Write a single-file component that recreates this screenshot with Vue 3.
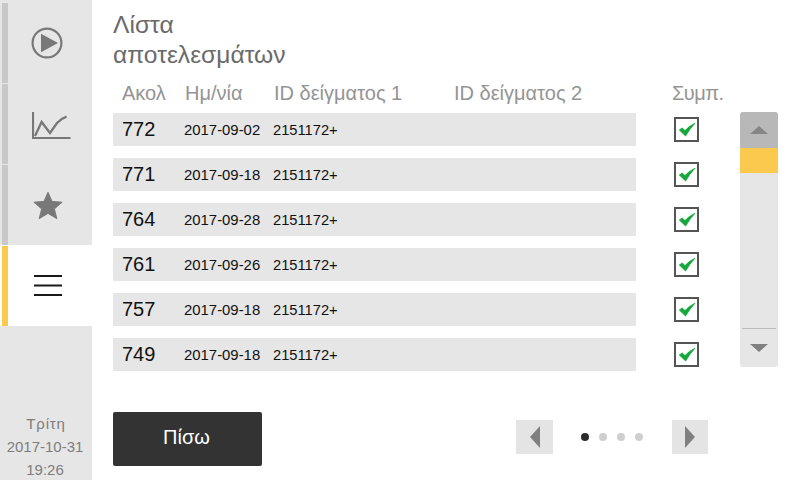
<script setup>
const rows = [
  ['772', '2017-09-02'],
  ['771', '2017-09-18'],
  ['764', '2017-09-28'],
  ['761', '2017-09-26'],
  ['757', '2017-09-18'],
  ['749', '2017-09-18'],
]
const tabs = ['play', 'chart', 'star', 'menu']
</script>

<template>
  <div class="screen">
    <aside class="side">
      <div class="tabs">
        <div v-for="t in tabs" :key="t" class="tab" :class="{ active: t === 'menu' }">
          <div class="strip"></div>
          <div class="tab-icon" :class="t">
            <svg v-if="t === 'play'" width="34" height="34" viewBox="0 0 34 34">
              <circle cx="17" cy="17" r="14.4" fill="none" stroke="#787878" stroke-width="2.2" />
              <path d="M11 7.7 L28 17 L11 26.3 Z" fill="#787878" />
            </svg>
            <svg v-else-if="t === 'chart'" width="40" height="30" viewBox="0 0 40 30">
              <path d="M1 3 V29 H38.5" fill="none" stroke="#787878" stroke-width="2.2" />
              <path d="M3 27 L9.6 13 L18 24 L25 14 Q29 9.5 34.6 7.6" fill="none" stroke="#787878" stroke-width="2.3" />
            </svg>
            <svg v-else-if="t === 'star'" width="30" height="29" viewBox="0 0 32 30">
              <path d="M16 .8 L20.3 10.6 L31 11.5 L22.8 18.6 L25.4 29 L16 23.4 L6.6 29 L9.2 18.6 L1 11.5 L11.7 10.6 Z" fill="#787878" stroke="#787878" stroke-linejoin="round" />
            </svg>
            <svg v-else width="28" height="24" viewBox="0 0 28 24">
              <path d="M0 2 H28 M0 11.5 H28 M0 21 H28" stroke="#1a1a1a" stroke-width="2" />
            </svg>
          </div>
        </div>
      </div>
      <div class="clock">
        <div class="day">Τρίτη</div>
        <div>2017-10-31</div>
        <div>19:26</div>
      </div>
    </aside>

    <main class="main">
      <h1 class="title">Λίστα<br />αποτελεσμάτων</h1>

      <div class="head">
        <span>Ακολ</span>
        <span>Ημ/νία</span>
        <span>ID δείγματος 1</span>
        <span>ID δείγματος 2</span>
        <span class="conf">Συμπ.</span>
      </div>

      <div class="body">
        <div class="list">
          <div v-for="r in rows" :key="r[0]" class="line">
            <div class="row">
              <span class="num">{{ r[0] }}</span>
              <span class="date">{{ r[1] }}</span>
              <span>2151172+</span>
            </div>
            <div class="check">
              <svg width="18" height="15" viewBox="-1 -1 18 15">
                <path d="M0.3 7 L3.2 5 L6 7.6 Q10 3 16 0.2 Q10.5 6 6.6 13 Z" fill="#14a83a" stroke="#14a83a" stroke-width="0.8" stroke-linejoin="round" />
              </svg>
            </div>
          </div>
        </div>

        <div class="scroll">
          <div class="sc-up"><span class="tri-up"></span></div>
          <div class="sc-thumb"></div>
          <div class="sc-track"></div>
          <div class="sc-down"><span class="tri-down"></span></div>
        </div>
      </div>

      <div class="foot">
        <button class="back">Πίσω</button>
        <div class="pager">
          <div class="pg-btn"><span class="tri-left"></span></div>
          <div class="dots">
            <span class="dot on"></span>
            <span class="dot"></span>
            <span class="dot"></span>
            <span class="dot"></span>
          </div>
          <div class="pg-btn narrow"><span class="tri-right"></span></div>
        </div>
      </div>
    </main>
  </div>
</template>

<style>
html, body { margin: 0; background: #fff; }
</style>

<style scoped>
.screen {
  width: 800px;
  height: 480px;
  display: flex;
  overflow: hidden;
  background: #fff;
  font-family: "Liberation Sans", Arial, sans-serif;
}
.side {
  width: 92px;
  height: 480px;
  background: #e6e6e6;
  display: flex;
  flex-direction: column;
  justify-content: space-between;
  flex: none;
}
.tabs { padding-top: 3px; display: flex; flex-direction: column; gap: 1px; }
.tab { height: 80px; display: flex; }
.tab.active { background: #fff; box-shadow: 0 -1px 0 #fff; }
.strip { width: 6px; margin-left: 2px; background: #c8c8c8; flex: none; }
.active .strip { background: #fcc94f; }
.tab-icon { flex: 1; display: flex; align-items: center; justify-content: center; padding-right: 4px; }
.tab-icon.play { padding-right: 6px; }
.tab-icon.chart { padding-right: 0; padding-left: 4px; }
.tab-icon svg { display: block; }
.clock {
  text-align: center;
  color: #7d7d7d;
  font-size: 15px;
  line-height: 23px;
  margin-bottom: -1px;
  padding-right: 2px;
}
.day { letter-spacing: 0.8px; padding-left: 2px; }
.main { flex: 1; padding-left: 21px; display: flex; flex-direction: column; }
.title {
  margin: 10px 0 0;
  font-size: 24.6px;
  line-height: 30px;
  font-weight: 400;
  color: #6a6a6a;
}
.head {
  height: 26px;
  margin-top: 10px;
  display: grid;
  grid-template-columns: 63px 89px 180px 218px auto;
  padding-left: 9px;
  align-items: center;
  font-size: 20px;
  color: #949494;
}
.conf { letter-spacing: -0.5px; }
.body { display: flex; margin-top: 6px; }
.list { width: 587px; display: flex; flex-direction: column; gap: 12px; padding-top: 1px; flex: none; }
.line { display: flex; align-items: center; height: 33px; }
.row {
  width: 523px;
  height: 33px;
  background: #e6e6e6;
  display: grid;
  grid-template-columns: 62px 89px auto;
  padding-left: 9px;
  box-sizing: border-box;
  align-items: center;
  color: #111;
  font-size: 14.7px;
  flex: none;
}
.num { font-size: 20px; }
.date { font-size: 14.9px; }
.check {
  margin-left: 38px;
  width: 25px;
  height: 25px;
  box-sizing: border-box;
  border: 2px solid #555;
  display: flex;
  align-items: center;
  justify-content: center;
  flex: none;
}
.check svg { display: block; }
.scroll {
  margin-left: 40px;
  width: 38px;
  height: 255px;
  background: #e6e6e6;
  border-radius: 3px;
  display: flex;
  flex-direction: column;
  overflow: hidden;
}
.sc-up { height: 36px; background: #b8b8b8; display: flex; align-items: center; justify-content: center; flex: none; }
.sc-thumb { height: 25px; background: #fcc94f; flex: none; }
.sc-track { height: 155px; flex: none; }
.sc-down {
  flex: 1;
  margin: 0 2px;
  border-top: 1px solid #bcbcbc;
  display: flex;
  align-items: center;
  justify-content: center;
}
.tri-up { border-style: solid; border-color: transparent transparent #858585; border-width: 0 9px 8px; }
.tri-down { border-style: solid; border-color: #808080 transparent transparent; border-width: 8px 9px 0; }
.tri-left { border-style: solid; border-color: transparent #808080 transparent transparent; border-width: 11px 10px 11px 0; }
.tri-right { border-style: solid; border-color: transparent transparent transparent #808080; border-width: 11px 0 11px 10px; }
.foot { display: flex; margin-top: 41px; align-items: center; }
.back {
  width: 149px;
  height: 54px;
  border: 0;
  border-radius: 2px;
  background: #333;
  color: #fff;
  font: 20px "Liberation Sans", Arial, sans-serif;
  padding: 0 2px 4px 0;
}
.pager { margin-left: 254px; margin-bottom: 4px; display: flex; align-items: center; }
.pg-btn { width: 37px; height: 34px; background: #e4e4e4; display: flex; align-items: center; justify-content: center; }
.pg-btn.narrow { width: 36px; }
.dots { width: 119px; box-sizing: border-box; padding-right: 2px; display: flex; justify-content: center; gap: 10px; }
.dot { width: 8px; height: 8px; border-radius: 50%; background: #cfcfcf; }
.dot.on { background: #2b2b2b; }
</style>
